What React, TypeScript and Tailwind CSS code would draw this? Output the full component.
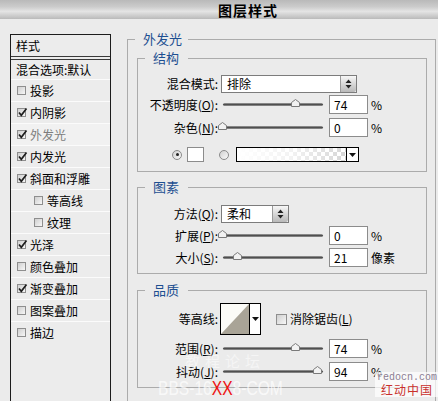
import React from 'react';

// Photoshop "图层样式" dialog, 外发光 page

const FONT = "font-['Noto_Sans_CJK_SC','Noto_Sans',sans-serif]";

interface StyleItem {
  label: string;
  checked: boolean;
  indent?: boolean;
  active?: boolean;
}

const styleItems: StyleItem[] = [
  { label: '投影', checked: false },
  { label: '内阴影', checked: true },
  { label: '外发光', checked: true, active: true },
  { label: '内发光', checked: true },
  { label: '斜面和浮雕', checked: true },
  { label: '等高线', checked: false, indent: true },
  { label: '纹理', checked: false, indent: true },
  { label: '光泽', checked: true },
  { label: '颜色叠加', checked: false },
  { label: '渐变叠加', checked: true },
  { label: '图案叠加', checked: false },
  { label: '描边', checked: false },
];

const CheckBox = ({ checked, size = 9 }: { checked: boolean; size?: number }) => (
  <span
    className="relative block shrink-0 border border-[#8e8e8e] bg-gradient-to-br from-[#cfcfcf] to-[#f7f7f7]"
    style={{ width: size, height: size }}
  >
    {checked && (
      <svg className="absolute left-[-1px] top-[-2px]" width="11" height="11" viewBox="0 0 11 11">
        <path d="M2 5.5 L4.3 8.3 L9.5 1.5" stroke="#1e1e1e" strokeWidth="1.7" fill="none" />
      </svg>
    )}
  </span>
);

const Label = ({ children }: { children: React.ReactNode }) => (
  <span className="w-[80px] shrink-0 text-right text-[12px] leading-[14px] text-black">{children}</span>
);

const Slider = ({ pos }: { pos: number }) => (
  <div className="relative ml-[5px] flex h-[9px] w-[100px] items-center">
    <div className="h-[3px] w-full rounded-full bg-gradient-to-b from-[#a5a5a5] via-[#4f4f4f] to-[#9a9a9a]" />
    <svg className="absolute top-[-1px]" style={{ left: pos }} width="9" height="8" viewBox="0 0 9 8">
      <path d="M0.5 7.5 V3.5 L4.5 0.5 L8.5 3.5 V7.5 Z" fill="#f2f2f2" stroke="#7a7a7a" />
    </svg>
  </div>
);

const NumBox = ({ value }: { value: string }) => (
  <div className="ml-[6px] h-[19px] w-[39px] border border-[#8c8c8c] bg-white pl-[4px] text-[12px] leading-[17px] text-black">
    {value}
  </div>
);

const SliderRow = ({
  label,
  pos,
  value,
  unit,
  className = '',
}: {
  label: React.ReactNode;
  pos: number;
  value: string;
  unit: string;
  className?: string;
}) => (
  <div className={`flex items-center ${className}`}>
    <Label>{label}</Label>
    <Slider pos={pos} />
    <NumBox value={value} />
    <span className="ml-[3px] text-[12px] leading-[14px] text-black">{unit}</span>
  </div>
);

const Spinner = () => (
  <span className="flex h-full w-[16px] items-center justify-center rounded-r-[2px] border-l border-[#9a9a9a] bg-gradient-to-b from-[#f7f7f7] to-[#b9b9b9]">
    <svg width="7" height="10" viewBox="0 0 7 10">
      <path d="M3.5 0.5 L6.5 4 H0.5 Z M0.5 6 H6.5 L3.5 9.5 Z" fill="#222" />
    </svg>
  </span>
);

const Select = ({ value, width }: { value: string; width: number }) => (
  <div className="ml-[3px] flex h-[18px] border border-[#7c7c7c] bg-white" style={{ width }}>
    <span className="flex-1 pl-[5px] text-[12px] leading-[16px] text-black">{value}</span>
    <Spinner />
  </div>
);

const Radio = ({ on }: { on: boolean }) => (
  <span className="flex h-[10px] w-[10px] shrink-0 items-center justify-center rounded-full border border-[#8a8a8a] bg-gradient-to-br from-[#d0d0d0] to-[#fafafa]">
    {on && <span className="h-[3px] w-[3px] rounded-full bg-[#222]" />}
  </span>
);

const DropArrow = () => (
  <svg width="7" height="4" viewBox="0 0 7 4">
    <path d="M0 0 H7 L3.5 4 Z" fill="#111" />
  </svg>
);

const Group = ({
  title,
  className = '',
  children,
}: {
  title: string;
  className?: string;
  children: React.ReactNode;
}) => (
  <fieldset className={`border border-[#ababab] ${className}`}>
    <legend className="ml-[7px] pl-[8px] pr-[9px] text-[13px] leading-[16px] text-[#1d4f91]">{title}</legend>
    {children}
  </fieldset>
);

export default function App() {
  return (
    <div className={`relative h-[401px] w-[438px] overflow-hidden bg-[#ebebeb] ${FONT}`}>
      {/* Title bar */}
      <div className="flex h-[19px] items-center justify-center bg-[linear-gradient(to_bottom,#b9b9b9_0%,#cbcbcb_35%,#e4e4e4_60%,#cacaca_85%,#bababa_100%)] pl-[58px]">
        <span className="text-[14px] font-bold leading-[16px] tracking-[1px] text-black">图层样式</span>
      </div>

      <div className="flex">
        {/* Style list */}
        <div className="ml-[10px] mt-[15px] h-[380px] w-[101px] shrink-0 border border-[#1c1c1c] bg-[#ececec]">
          <div className="h-[21px] pl-[5px] text-[12px] leading-[21px] text-black">样式</div>
          <div className="h-[4px] border-y border-[#3a3a3a]" />
          <div className="h-[19px] pl-[5px] text-[12px] leading-[19px] text-black">混合选项:默认</div>
          {styleItems.map(item => (
            <div
              key={item.label}
              className={`flex h-[22px] items-center border-t border-[#fbfbfb] ${item.indent ? 'pl-[23px]' : 'pl-[6px]'} ${
                item.active ? 'bg-[#f1f1f1]' : ''
              }`}
            >
              <CheckBox checked={item.checked} />
              <span className={`ml-[4px] text-[12px] leading-[14px] ${item.active ? 'text-[#7d7d7d]' : 'text-black'}`}>
                {item.label}
              </span>
            </div>
          ))}
        </div>

        {/* Settings */}
        <fieldset className="ml-[16px] mt-[12px] h-[400px] w-[309px] shrink-0 border border-[#ababab] pl-[9px] pr-[8px]">
          <legend className="ml-[-2px] pl-[8px] pr-[6px] text-[13px] leading-[16px] text-[#1d4f91]">外发光</legend>

          <Group title="结构" className="mt-[3px] pb-[9px]">
            <div className="mt-[9px] flex items-center">
              <Label>混合模式:</Label>
              <Select value="排除" width={136} />
            </div>
            <SliderRow
              className="mt-[2px]"
              label={<>不透明度(<u>O</u>):</>}
              pos={68}
              value="74"
              unit="%"
            />
            <SliderRow className="mt-[4px]" label={<>杂色(<u>N</u>):</>} pos={-5} value="0" unit="%" />
            <div className="mt-[10px] flex h-[15px] items-center">
              <span className="ml-[34px]">
                <Radio on />
              </span>
              <span className="ml-[5px] h-[15px] w-[17px] border border-[#8c8c8c] bg-white" />
              <span className="ml-[15px]">
                <Radio on={false} />
              </span>
              <div className="ml-[7px] flex h-[15px] w-[123px] border border-black">
                <div className="flex-1 bg-[repeating-conic-gradient(#d6d6d6_0_25%,#ffffff_0_50%)] bg-[length:8px_8px]">
                  <div className="h-full w-full bg-gradient-to-r from-white via-white/70 to-transparent" />
                </div>
                <span className="flex w-[12px] items-center justify-center border-l border-black bg-white">
                  <DropArrow />
                </span>
              </div>
            </div>
          </Group>

          <Group title="图素" className="mt-[7px] pb-[6px]">
            <div className="mt-[10px] flex items-center">
              <Label>方法(<u>Q</u>):</Label>
              <Select value="柔和" width={68} />
            </div>
            <SliderRow className="mt-[3px]" label={<>扩展(<u>P</u>):</>} pos={-5} value="0" unit="%" />
            <SliderRow className="mt-[3px]" label={<>大小(<u>S</u>):</>} pos={10} value="21" unit="像素" />
          </Group>

          <Group title="品质" className="mt-[8px] pb-[6px]">
            <div className="mt-[5px] flex items-center">
              <Label>等高线:</Label>
              <div className="ml-[2px] flex h-[32px] w-[41px] border border-black bg-white">
                <svg width="28" height="30" viewBox="0 0 28 30">
                  <rect width="28" height="30" fill="#fbfbf7" />
                  <path d="M0 30 L28 0 V30 Z" fill="#a9a497" />
                </svg>
                <span className="flex flex-1 items-center justify-center border-l border-black">
                  <DropArrow />
                </span>
              </div>
              <span className="ml-[15px]">
                <CheckBox checked={false} size={11} />
              </span>
              <span className="ml-[3px] text-[12px] leading-[14px] text-black">
                消除锯齿(<u>L</u>)
              </span>
            </div>
            <SliderRow className="mt-[4px]" label={<>范围(<u>R</u>):</>} pos={68} value="74" unit="%" />
            <SliderRow className="mt-[4px]" label={<>抖动(<u>J</u>):</>} pos={90} value="94" unit="%" />
          </Group>
        </fieldset>
      </div>

      {/* Watermarks */}
      <span className="pointer-events-none absolute left-[185px] top-[353px] text-[15px] leading-[16px] tracking-[5px] text-white/50">
        教程论坛
      </span>
      <span className="pointer-events-none absolute left-[158px] top-[378px] origin-left scale-x-[0.78] whitespace-nowrap font-['Liberation_Sans',sans-serif] text-[20px] leading-[21px] text-white/70">
        BBS-16<span className="text-[#ee1111]">XX</span>8-COM
      </span>
      <div className="pointer-events-none absolute left-[375px] top-[372px] flex flex-col items-center bg-white/70 px-[2px]">
        <span className="font-['Liberation_Mono',monospace] text-[10px] leading-[11px] text-[#8b7d92]">redocn.com</span>
        <span className="text-[12px] leading-[14px] tracking-[1px] text-[#c9302c]">红动中国</span>
      </div>
    </div>
  );
}
